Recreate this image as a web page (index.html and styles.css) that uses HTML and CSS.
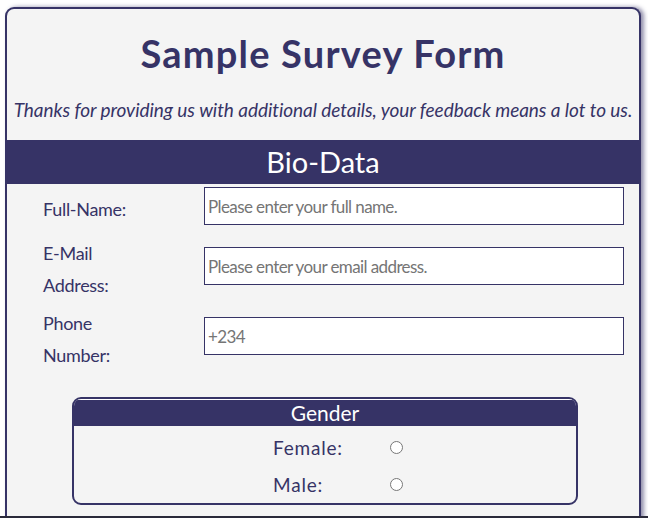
FILE: index.html
```html
<!DOCTYPE html>
<html lang="en">
<head>
<meta charset="utf-8">
<title>Sample Survey Form</title>
<link rel="stylesheet" href="styles.css">
</head>
<body>
<main class="card">
  <h1 class="title">Sample Survey Form</h1>
  <p class="intro">Thanks for providing us with additional details, your feedback means a lot to us.</p>
  <h2 class="section-bar">Bio-Data</h2>
  <form class="bio">
    <div class="row row-single">
      <label class="lbl" for="name">Full-Name:</label>
      <input class="field" id="name" type="text" placeholder="Please enter your full name.">
    </div>
    <div class="row">
      <label class="lbl" for="email">E-Mail Address:</label>
      <input class="field" id="email" type="email" placeholder="Please enter your email address.">
    </div>
    <div class="row">
      <label class="lbl" for="phone">Phone Number:</label>
      <input class="field" id="phone" type="tel" placeholder="+234">
    </div>
    <div class="gender">
      <div class="gender-head">Gender</div>
      <div class="gender-body">
        <div class="gender-row">
          <label class="glbl" for="female">Female:</label>
          <input class="radio" id="female" type="radio" name="gender">
        </div>
        <div class="gender-row">
          <label class="glbl" for="male">Male:</label>
          <input class="radio" id="male" type="radio" name="gender">
        </div>
      </div>
    </div>
  </form>
</main>
<div class="bottom-line"></div>
</body>
</html>
```
FILE: styles.css
```css
html, body {
  margin: 0;
  padding: 0;
  background: #ffffff;
}
body {
  font-family: Lato, "Open Sans", sans-serif;
  color: #363366;
  overflow: hidden;
}
.card {
  margin: 7px 7px 0 5px;
  background: #f4f4f4;
  border: 2px solid #363366;
  border-bottom: none;
  border-radius: 9px 9px 0 0;
  box-shadow: 3px 0 4px rgba(54, 51, 102, 0.55);
  height: 560px;
}
.title {
  margin: 21px 0 0;
  text-align: center;
  font-size: 38px;
  font-weight: 700;
  line-height: 46px;
  letter-spacing: 1.2px;
}
.intro {
  margin: 22px 0 0;
  text-align: center;
  font-style: italic;
  font-size: 19px;
  line-height: 24px;
  letter-spacing: -0.05px;
}
.section-bar {
  margin: 18px 0 0;
  height: 44px;
  background: #363366;
  color: #fff;
  text-align: center;
  font-size: 29px;
  font-weight: 400;
  line-height: 44px;
}
.bio {
  padding-top: 3px;
}
.row {
  display: flex;
  align-items: flex-start;
  margin-bottom: 6px;
}
.row-single {
  padding-bottom: 6px;
}
.lbl {
  width: 100px;
  margin-left: 36px;
  font-size: 18px;
  letter-spacing: -0.3px;
  line-height: 32px;
}
.row-single .lbl {
  padding-top: 6px;
}
.field {
  margin: 10px 0 0 61px;
  width: 420px;
  height: 38px;
  box-sizing: border-box;
  border: 1px solid #363366;
  background: #fff;
  padding: 0 3px;
  font-family: Lato, sans-serif;
  font-size: 17px;
  letter-spacing: -0.6px;
  color: #333;
}
.row-single .field {
  margin-top: 0;
}
.field::placeholder {
  color: #757575;
}
.gender {
  margin: 26px 0 0 65px;
  width: 506px;
  box-sizing: border-box;
  border: 2px solid #363366;
  border-radius: 9px;
  overflow: hidden;
}
.gender-head {
  background: #363366;
  color: #fff;
  border-top: 1px solid #fff;
  text-align: center;
  font-size: 21px;
  line-height: 26px;
}
.gender-body {
  padding-top: 3px;
}
.gender-row {
  display: flex;
  justify-content: center;
  align-items: center;
  padding-left: 26px;
  height: 37px;
}
.glbl {
  width: 117px;
  font-size: 19px;
  letter-spacing: 0.8px;
}
.radio {
  margin: 0;
  width: 13px;
  height: 13px;
}
.bottom-line {
  position: fixed;
  left: 0;
  right: 0;
  bottom: 0;
  height: 2px;
  background: #2a2a3a;
}
```
